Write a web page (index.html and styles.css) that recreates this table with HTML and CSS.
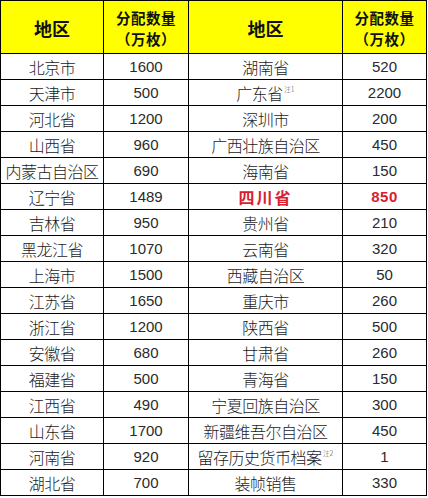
FILE: index.html
```html
<!DOCTYPE html>
<html lang="zh">
<head>
<meta charset="utf-8">
<link rel="stylesheet" href="styles.css">
</head>
<body>
<div class="sheet">
  <div class="cell head big">地区</div>
  <div class="cell head"><span class="line">分配数量</span><span class="line">（万枚）</span></div>
  <div class="cell head big">地区</div>
  <div class="cell head"><span class="line">分配数量</span><span class="line">（万枚）</span></div>

  <div class="cell">北京市</div><div class="cell num">1600</div><div class="cell">湖南省</div><div class="cell num">520</div>
  <div class="cell">天津市</div><div class="cell num">500</div><div class="cell">广东省<sup class="note">注1</sup></div><div class="cell num">2200</div>
  <div class="cell">河北省</div><div class="cell num">1200</div><div class="cell">深圳市</div><div class="cell num">200</div>
  <div class="cell">山西省</div><div class="cell num">960</div><div class="cell">广西壮族自治区</div><div class="cell num">450</div>
  <div class="cell">内蒙古自治区</div><div class="cell num">690</div><div class="cell">海南省</div><div class="cell num">150</div>
  <div class="cell">辽宁省</div><div class="cell num">1489</div><div class="cell red">四川省</div><div class="cell num red">850</div>
  <div class="cell">吉林省</div><div class="cell num">950</div><div class="cell">贵州省</div><div class="cell num">210</div>
  <div class="cell">黑龙江省</div><div class="cell num">1070</div><div class="cell">云南省</div><div class="cell num">320</div>
  <div class="cell">上海市</div><div class="cell num">1500</div><div class="cell">西藏自治区</div><div class="cell num">50</div>
  <div class="cell">江苏省</div><div class="cell num">1650</div><div class="cell">重庆市</div><div class="cell num">260</div>
  <div class="cell">浙江省</div><div class="cell num">1200</div><div class="cell">陕西省</div><div class="cell num">500</div>
  <div class="cell">安徽省</div><div class="cell num">680</div><div class="cell">甘肃省</div><div class="cell num">260</div>
  <div class="cell">福建省</div><div class="cell num">500</div><div class="cell">青海省</div><div class="cell num">150</div>
  <div class="cell">江西省</div><div class="cell num">490</div><div class="cell">宁夏回族自治区</div><div class="cell num">300</div>
  <div class="cell">山东省</div><div class="cell num">1700</div><div class="cell">新疆维吾尔自治区</div><div class="cell num">450</div>
  <div class="cell">河南省</div><div class="cell num">920</div><div class="cell">留存历史货币档案<sup class="note">注2</sup></div><div class="cell num">1</div>
  <div class="cell">湖北省</div><div class="cell num">700</div><div class="cell">装帧销售</div><div class="cell num">330</div>
</div>
</body>
</html>
```
FILE: styles.css
```css
html, body {
  margin: 0;
  padding: 0;
  background: #ffffff;
}

.sheet {
  display: grid;
  grid-template-columns: 102px 84px 153px 83px;
  grid-template-rows: 52px repeat(17, 25px);
  gap: 1px;
  padding: 1px;
  background: #000000;
  width: max-content;
  font-family: "Noto Sans CJK SC", "Noto Sans", sans-serif;
  color: #1a1a1a;
}

.cell {
  background: #ffffff;
  display: flex;
  align-items: center;
  justify-content: center;
  font-size: 16px;
  font-weight: 300;
  line-height: 18px;
  white-space: nowrap;
  letter-spacing: -0.5px;
}

.num {
  font-family: "Liberation Sans", "DejaVu Sans", sans-serif;
  font-size: 15px;
  font-weight: 400;
  color: #2a2a2a;
  letter-spacing: 0;
}

.head {
  background: #ffff00;
  font-weight: 700;
  font-size: 16px;
  flex-direction: column;
  text-align: center;
  letter-spacing: 0;
  padding-top: 2px;
  color: #111111;
}

.head .line {
  display: block;
  font-size: 14.5px;
  line-height: 21px;
  letter-spacing: 0.5px;
}

.head.big {
  font-size: 18px;
}

.red {
  color: #d8202e;
  font-weight: 700;
  letter-spacing: 2px;
}

.num.red {
  color: #d8202e;
  letter-spacing: 0.5px;
}

.note {
  font-size: 7px;
  line-height: 7px;
  color: #555555;
  align-self: flex-start;
  margin-top: 6px;
  margin-left: 1px;
  letter-spacing: 0;
}
```
